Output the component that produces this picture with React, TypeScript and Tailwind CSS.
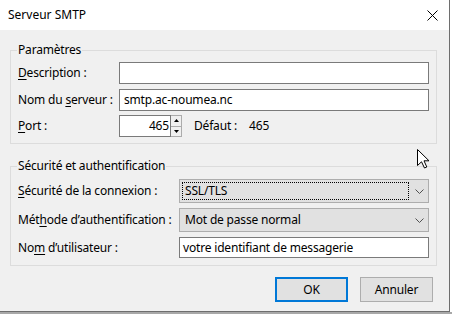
import React from "react";

const font = { fontFamily: '"Noto Sans", "Open Sans", sans-serif' };

function U({ children }: { children: React.ReactNode }) {
  return <span className="underline underline-offset-[2px] decoration-[1px]">{children}</span>;
}

function Chevron() {
  return (
    <svg width="9" height="5" viewBox="0 0 9 5" className="shrink-0">
      <polyline points="0.5,0.5 4.5,4.5 8.5,0.5" fill="none" stroke="#505050" strokeWidth="1" />
    </svg>
  );
}

export default function App() {
  return (
    <div className="w-[452px] h-[314px] bg-white overflow-hidden relative text-[12px] text-black tracking-[-0.18px]" style={font}>
      <div className="w-[450px] h-[312px] flex flex-col border-r border-b border-[#6e6e6e] bg-[#f0f0f0]">
        {/* title bar */}
        <div className="h-[30px] bg-white flex items-center justify-between pl-[8px] pr-[11px] shrink-0">
          <span className="text-[12px] leading-[16px] tracking-normal">Serveur SMTP</span>
          <svg width="11" height="11" viewBox="0 0 11 11">
            <path d="M0.5 0.5 L10.5 10.5 M10.5 0.5 L0.5 10.5" stroke="#000" strokeWidth="1" />
          </svg>
        </div>

        <div className="flex flex-col pt-[12px]">
          {/* Group 1 */}
          <fieldset className="ml-[10px] w-[427px] border border-[#dcdcdc] pt-[4px] pb-[6px] pl-[7px] pr-[6px]">
            <legend className="ml-[-1px] px-[1px] leading-[16px]">Paramètres</legend>
            <div className="flex items-center h-[22px]">
              <span className="w-[101px] shrink-0"><U>D</U>escription :</span>
              <div className="w-[310px] h-[22px] bg-white border border-[#7a7a7a]" />
            </div>
            <div className="flex items-center h-[22px] mt-[5px]">
              <span className="w-[101px] shrink-0">Nom du <U>s</U>erveur :</span>
              <div className="w-[310px] h-[22px] bg-white border border-[#7a7a7a] flex items-center pl-[4px]">
                smtp.ac-noumea.nc
              </div>
            </div>
            <div className="flex items-center h-[22px] mt-[4px]">
              <span className="w-[101px] shrink-0"><U>P</U>ort :</span>
              <div className="w-[52px] h-[22px] bg-white border border-[#7a7a7a] flex items-center justify-end pr-[1px]">
                465
              </div>
              <div className="w-[11px] h-[22px] flex flex-col border border-l-0 border-[#acacac] bg-[#f0f0f0]">
                <div className="flex-1 flex items-center justify-center border-b border-[#acacac]">
                  <svg width="5" height="3" viewBox="0 0 5 3"><polygon points="2.5,0 5,3 0,3" fill="#000" /></svg>
                </div>
                <div className="flex-1 flex items-center justify-center">
                  <svg width="5" height="3" viewBox="0 0 5 3"><polygon points="0,0 5,0 2.5,3" fill="#000" /></svg>
                </div>
              </div>
              <span className="ml-[12px]">Défaut :</span>
              <span className="ml-[12px]">465</span>
            </div>
          </fieldset>

          {/* Group 2 */}
          <fieldset className="ml-[10px] mt-[14px] w-[427px] border border-[#dcdcdc] pt-[5px] pb-[7px] pl-[7px] pr-[6px]">
            <legend className="ml-[-1px] px-[1px] leading-[16px]">Sécurité et authentification</legend>
            <div className="flex items-center h-[24px]">
              <span className="w-[161px] shrink-0"><U>S</U>écurité de la connexion :</span>
              <div className="w-[250px] h-[24px] bg-[#e1e1e1] border border-[#adadad] flex items-center pl-[2px] pr-[4px]">
                <div className="w-[227px] h-[18px] border border-dotted border-black flex items-center pl-[2px]">SSL/TLS</div>
                <div className="flex-1 flex justify-end">
                  <Chevron />
                </div>
              </div>
            </div>
            <div className="flex items-center h-[24px] mt-[5px]">
              <span className="w-[161px] shrink-0">Mét<U>h</U>ode d’authentification :</span>
              <div className="w-[250px] h-[24px] bg-[#e1e1e1] border border-[#adadad] flex items-center justify-between pl-[5px] pr-[4px]">
                <span>Mot de passe normal</span>
                <Chevron />
              </div>
            </div>
            <div className="flex items-center h-[21px] mt-[5px]">
              <span className="w-[161px] shrink-0">No<U>m</U> d’utilisateur :</span>
              <div className="w-[250px] h-[21px] bg-white border border-[#7a7a7a] flex items-center pl-[3px]">
                votre identifiant de messagerie
              </div>
            </div>
          </fieldset>

          {/* Buttons */}
          <div className="flex justify-end gap-[12px] pr-[16px] mt-[11px]">
            <button className="w-[73px] h-[25px] bg-[#e1e1e1] border-2 border-[#0078d7] flex items-center justify-center">
              OK
            </button>
            <button className="w-[73px] h-[25px] bg-[#e1e1e1] border border-[#adadad] flex items-center justify-center">
              Annuler
            </button>
          </div>
        </div>
      </div>
      <div className="h-[2px] w-[452px] bg-[#a8a8a8]" />

      {/* mouse cursor */}
      <svg className="absolute left-[417px] top-[149px]" width="13" height="20" viewBox="0 0 13 20">
        <polygon
          points="0.5,0.5 0.5,16.5 4.5,12.8 7.5,19 9.8,18 7,11.8 12,11.8"
          fill="#fff"
          stroke="#000"
          strokeWidth="1"
          strokeLinejoin="miter"
        />
      </svg>
    </div>
  );
}
